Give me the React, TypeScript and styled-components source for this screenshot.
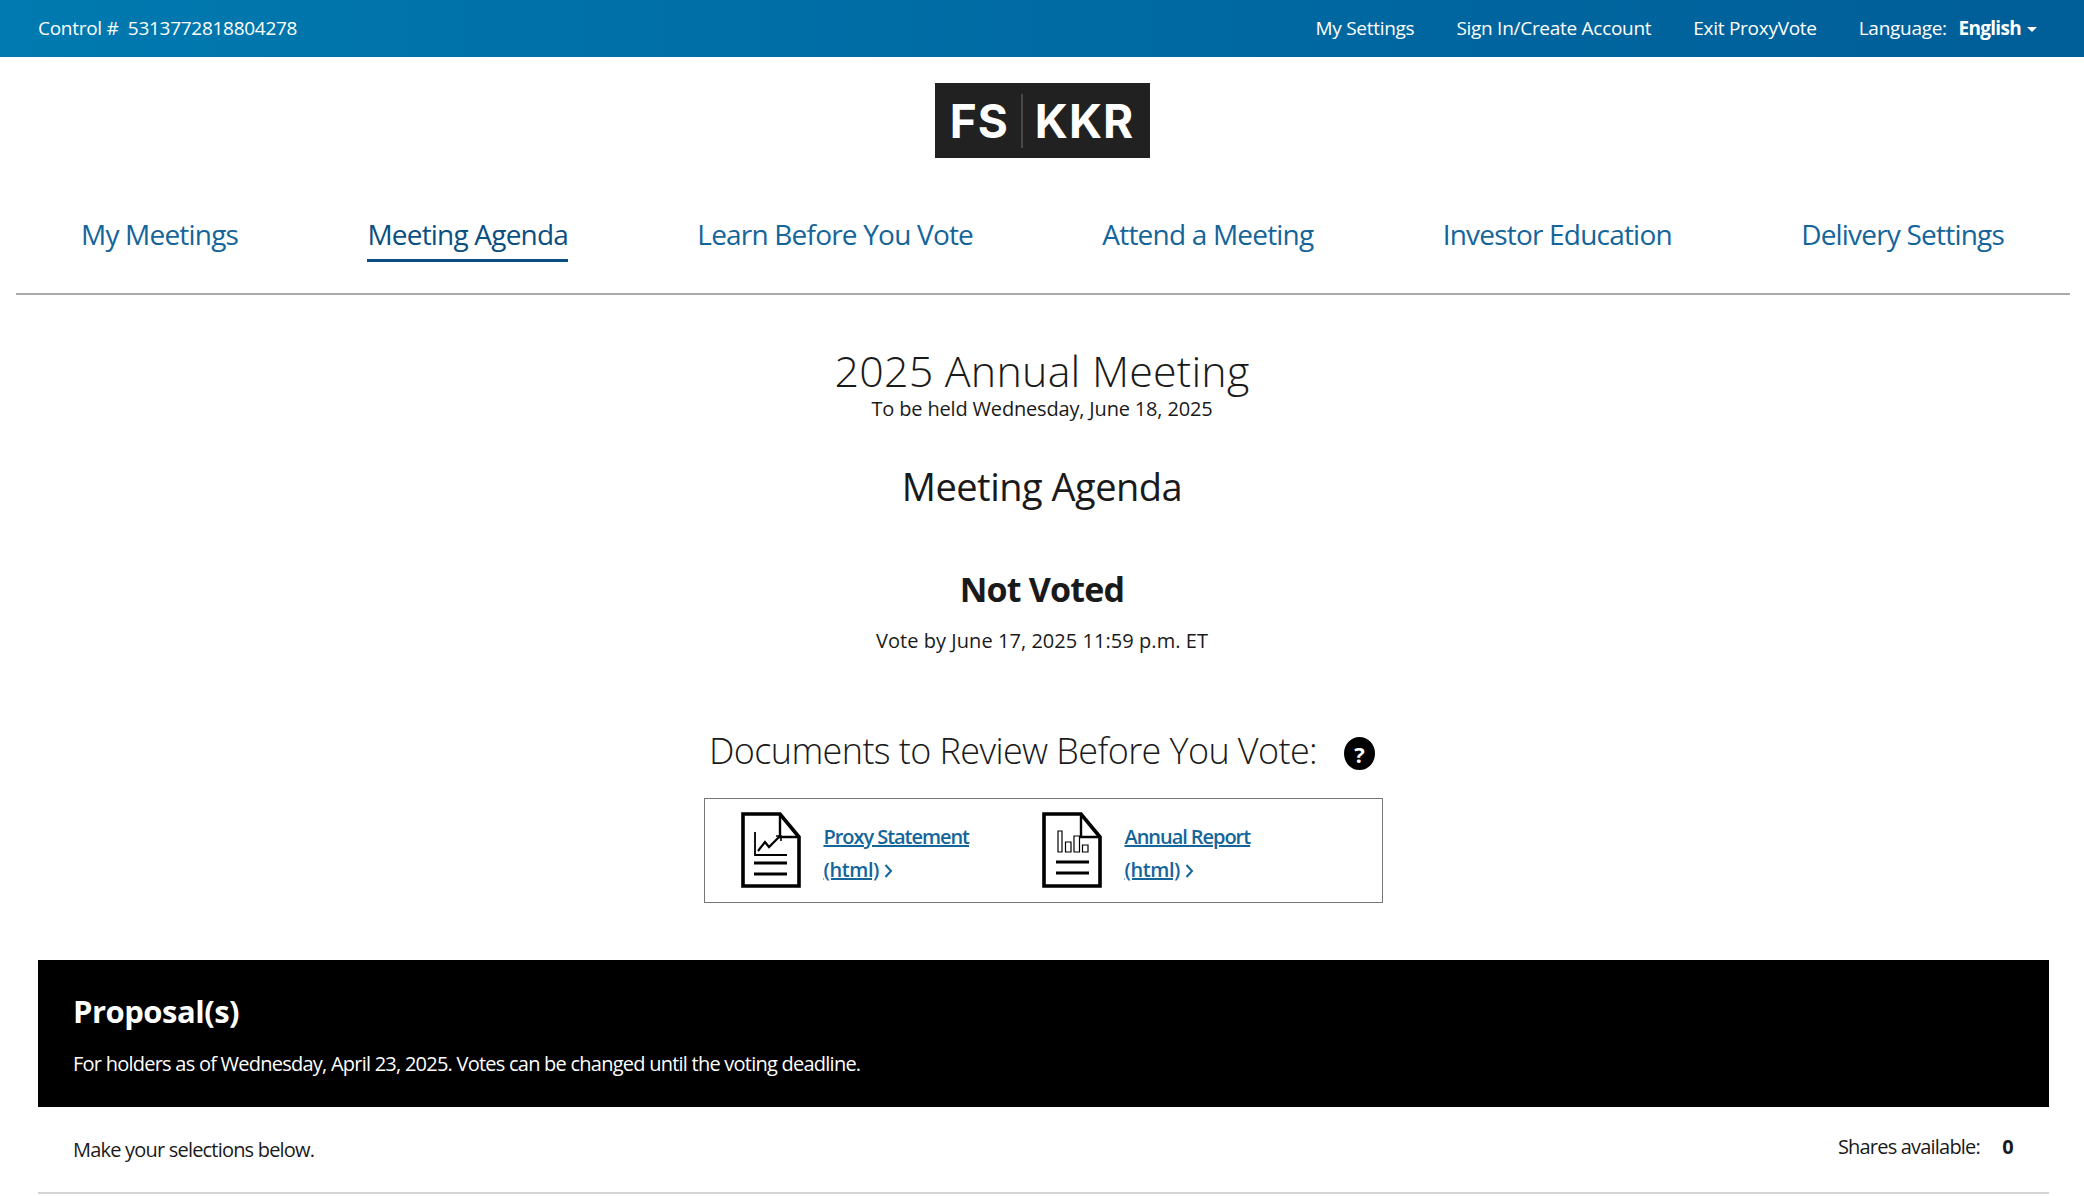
import React from 'react';
import styled, { createGlobalStyle } from 'styled-components';

const GlobalStyle = createGlobalStyle`
  html, body {
    margin: 0;
    padding: 0;
    background: #fff;
    overflow: hidden;
  }
  body {
    font-family: "Open Sans", "Liberation Sans", sans-serif;
    color: #1a1a1a;
  }
`;

const navItems = [
  'My Meetings',
  'Meeting Agenda',
  'Learn Before You Vote',
  'Attend a Meeting',
  'Investor Education',
  'Delivery Settings',
];

function ChartDocIcon() {
  return (
    <svg width="60" height="76" viewBox="0 0 60 76" fill="none" stroke="#000">
      <path d="M2 2H39L58 25V74H2Z" strokeWidth="3.6" />
      <path d="M39 2V25H58" strokeWidth="2.4" />
      <path d="M14 20V43H46" strokeWidth="1.8" />
      <path d="M17 39L24 30L28 35L39 24" strokeWidth="2.2" />
      <path d="M35 24H40V29" strokeWidth="1.6" />
      <path d="M13 51H46M13 62H46" strokeWidth="3" />
    </svg>
  );
}

function BarsDocIcon() {
  return (
    <svg width="60" height="76" viewBox="0 0 60 76" fill="none" stroke="#000">
      <path d="M2 2H39L58 25V74H2Z" strokeWidth="3.6" />
      <path d="M39 2V25H58" strokeWidth="2.4" />
      <path d="M16 19H20V40H16ZM23.5 30H29V40H23.5ZM32 24H37.5V40H32ZM40.5 33H46V40H40.5Z" strokeWidth="1.2" />
      <path d="M14 50H47M14 61H47" strokeWidth="3" />
    </svg>
  );
}

function ChevronIcon() {
  return (
    <ChevronSvg width="9" height="16" viewBox="0 0 9 16" fill="none" stroke="#14659a" strokeWidth="2">
      <path d="M1.5 2L7 8L1.5 14" />
    </ChevronSvg>
  );
}

export default function App() {
  return (
    <Page>
      <GlobalStyle />
      <TopBar>
        <ControlNumber>Control #&nbsp; 5313772818804278</ControlNumber>
        <TopLinks>
          <TopLink>My Settings</TopLink>
          <TopLink>Sign In/Create Account</TopLink>
          <TopLink>Exit ProxyVote</TopLink>
          <Language>
            Language: <strong>English</strong>
            <Caret />
          </Language>
        </TopLinks>
      </TopBar>

      <LogoRow>
        <Logo>
          <span>FS</span>
          <LogoDivider />
          <span>KKR</span>
        </Logo>
      </LogoRow>

      <Nav>
        {navItems.map(item => (
          <NavItem key={item} $active={item === 'Meeting Agenda'}>
            {item}
          </NavItem>
        ))}
      </Nav>

      <Main>
        <MeetingTitle>2025 Annual Meeting</MeetingTitle>
        <HeldOn>To be held Wednesday, June 18, 2025</HeldOn>
        <AgendaTitle>Meeting Agenda</AgendaTitle>
        <VoteStatus>Not Voted</VoteStatus>
        <VoteBy>Vote by June 17, 2025 11:59 p.m. ET</VoteBy>
        <DocsHeading>
          Documents to Review Before You Vote:
          <HelpBadge>?</HelpBadge>
        </DocsHeading>
        <DocsBox>
          <DocItem>
            <ChartDocIcon />
            <DocLinks>
              <DocLink>Proxy Statement</DocLink>
              <span>
                <FormatLink>(html)</FormatLink>
                <ChevronIcon />
              </span>
            </DocLinks>
          </DocItem>
          <DocItem>
            <BarsDocIcon />
            <DocLinks>
              <DocLink>Annual Report</DocLink>
              <span>
                <FormatLink>(html)</FormatLink>
                <ChevronIcon />
              </span>
            </DocLinks>
          </DocItem>
        </DocsBox>
      </Main>

      <Proposals>
        <ProposalHeader>
          <ProposalTitle>Proposal(s)</ProposalTitle>
          <ProposalNote>For holders as of Wednesday, April 23, 2025. Votes can be changed until the voting deadline.</ProposalNote>
        </ProposalHeader>
        <SelectionRow>
          <span>Make your selections below.</span>
          <Shares>
            Shares available: <strong>0</strong>
          </Shares>
        </SelectionRow>
      </Proposals>
    </Page>
  );
}

const Page = styled.div`
  width: 2084px;
  height: 1196px;
  overflow: hidden;
`;
const TopBar = styled.header`
  display: flex;
  justify-content: space-between;
  align-items: center;
  box-sizing: border-box;
  height: 57px;
  padding: 0 47px 2px 38px;
  background: linear-gradient(90deg, #007ab0 0%, #0070a8 30%, #005e98 100%);
  color: #fff;
  font-size: 19px;
  letter-spacing: -0.28px;
`;
const ControlNumber = styled.div``;
const TopLinks = styled.div`
  display: flex;
  align-items: center;
  gap: 42px;
`;
const TopLink = styled.a``;
const Language = styled.div`
  display: flex;
  align-items: center;
  white-space: pre;
  strong {
    margin-left: 7px;
    font-weight: 700;
    letter-spacing: -0.7px;
  }
`;
const Caret = styled.i`
  margin: 3px 0 0 6px;
  border-top: 5px solid #fff;
  border-left: 5px solid transparent;
  border-right: 5px solid transparent;
`;
const LogoRow = styled.div`
  display: flex;
  justify-content: center;
  padding-top: 26px;
`;
const Logo = styled.div`
  display: flex;
  align-items: center;
  justify-content: center;
  gap: 12px;
  width: 215px;
  height: 75px;
  background: #212121;
  color: #fff;
  font-family: "Inter", "Liberation Sans", sans-serif;
  font-weight: 700;
  font-size: 46px;
  letter-spacing: 1px;
`;
const LogoDivider = styled.i`
  width: 2px;
  height: 54px;
  background: #484848;
`;
const Nav = styled.nav`
  display: flex;
  justify-content: space-between;
  align-items: flex-start;
  box-sizing: border-box;
  height: 137px;
  margin: 0 14px 0 16px;
  padding: 56px 66px 0 65px;
  border-bottom: 2px solid #a9a9a9;
  font-size: 28px;
  letter-spacing: -0.8px;
`;
const NavItem = styled.a<{ $active?: boolean }>`
  height: 45px;
  line-height: 40px;
  color: ${p => (p.$active ? '#0b4f82' : '#14659a')};
  border-bottom: 3px solid ${p => (p.$active ? '#0b4f82' : 'transparent')};
  white-space: nowrap;
`;
const Main = styled.main`
  display: flex;
  flex-direction: column;
  align-items: center;
`;
const MeetingTitle = styled.h1`
  margin: 50px 0 0;
  font-size: 43px;
  line-height: 52px;
  font-weight: 300;
  letter-spacing: 0.2px;
`;
const HeldOn = styled.div`
  font-size: 20px;
  line-height: 24px;
  letter-spacing: -0.17px;
`;
const AgendaTitle = styled.h2`
  margin: 40px 0 0;
  font-size: 38px;
  line-height: 50px;
  font-weight: 400;
  letter-spacing: -0.5px;
`;
const VoteStatus = styled.div`
  margin-top: 55px;
  font-size: 34px;
  line-height: 46px;
  font-weight: 700;
  letter-spacing: -0.8px;
`;
const VoteBy = styled.div`
  margin-top: 17px;
  font-size: 20px;
  line-height: 24px;
  letter-spacing: 0.05px;
`;
const DocsHeading = styled.h3`
  display: flex;
  align-items: center;
  margin: 74px 0 0;
  font-size: 36px;
  line-height: 48px;
  font-weight: 300;
  letter-spacing: -0.6px;
`;
const HelpBadge = styled.span`
  display: inline-flex;
  align-items: center;
  justify-content: center;
  width: 31px;
  height: 33px;
  margin: 5px 0 0 27px;
  border-radius: 50%;
  background: #000;
  color: #fff;
  font-size: 22px;
  font-weight: 700;
  letter-spacing: 0;
`;
const DocsBox = styled.div`
  display: flex;
  box-sizing: border-box;
  width: 679px;
  height: 105px;
  margin: 23px 0 0 2px;
  padding: 13px 0 0 36px;
  border: 1.5px solid #777;
`;
const DocItem = styled.div`
  display: flex;
  gap: 23px;
  width: 301px;
`;
const DocLinks = styled.div`
  display: flex;
  flex-direction: column;
  gap: 6px;
  padding-top: 11px;
  font-size: 20px;
  line-height: 27px;
  font-weight: 600;
  color: #14659a;
  letter-spacing: -1.05px;
`;
const DocLink = styled.a`
  text-decoration: underline;
`;
const FormatLink = styled(DocLink)`
  letter-spacing: -0.4px;
`;
const ChevronSvg = styled.svg`
  margin-left: 5px;
  vertical-align: -2px;
`;
const Proposals = styled.section`
  margin: 57px 35px 0 38px;
`;
const ProposalHeader = styled.div`
  box-sizing: border-box;
  height: 147px;
  padding: 30px 35px 0;
  background: #000;
  color: #fff;
`;
const ProposalTitle = styled.div`
  font-size: 31px;
  line-height: 42px;
  font-weight: 700;
  letter-spacing: -0.5px;
`;
const ProposalNote = styled.div`
  margin-top: 19px;
  font-size: 20px;
  line-height: 26px;
  letter-spacing: -0.76px;
`;
const SelectionRow = styled.div`
  display: flex;
  justify-content: space-between;
  align-items: flex-start;
  box-sizing: border-box;
  height: 87px;
  padding: 29px 36px 0 35px;
  border-bottom: 2px solid #d4d4d4;
  font-size: 20px;
  line-height: 27px;
  letter-spacing: -0.8px;
`;
const Shares = styled.div`
  margin-top: -3px;
  white-space: pre;
  strong {
    margin-left: 18px;
    font-weight: 700;
  }
`;
